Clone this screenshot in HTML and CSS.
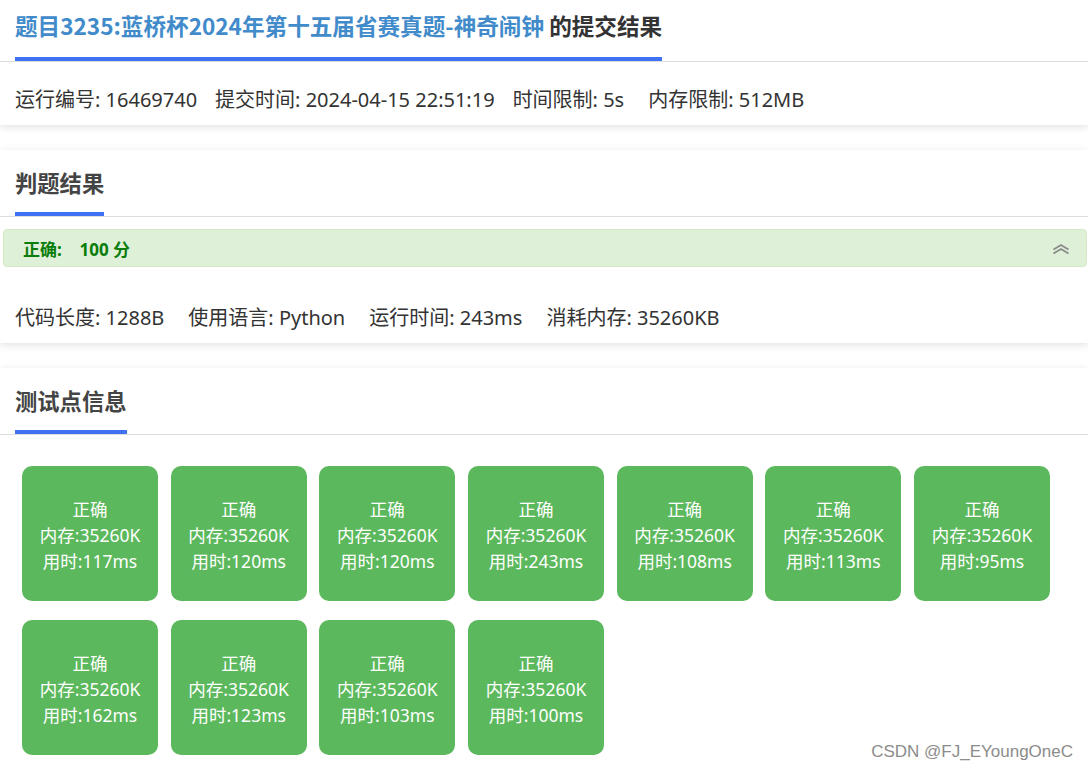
FILE: index.html
```html
<!DOCTYPE html>
<html lang="zh-CN">
<head>
<meta charset="utf-8">
<title>提交结果</title>
<link rel="stylesheet" href="styles.css">
</head>
<body>
<div class="page">
  <section class="card">
    <div class="card-head">
      <h1 class="title"><span class="title-link">题目3235:蓝桥杯2024年第十五届省赛真题-神奇闹钟</span> 的提交结果</h1>
    </div>
    <div class="info info-top">
      <span class="item gap-s">运行编号: 16469740</span>
      <span class="item gap-s">提交时间: 2024-04-15 22:51:19</span>
      <span class="item gap-l">时间限制: 5s</span>
      <span class="item">内存限制: 512MB</span>
    </div>
  </section>

  <section class="card">
    <div class="card-head">
      <h2 class="heading">判题结果</h2>
    </div>
    <div class="alert">
      <span class="alert-text">正确:&nbsp;&nbsp;&nbsp; 100 分</span>
      <svg class="chev" width="18" height="12" viewBox="0 0 18 12" aria-hidden="true">
        <polyline points="1.5,6.5 9,2 16.5,6.5" fill="none" stroke="#8a8a8a" stroke-width="1.8"/>
        <polyline points="1.5,10.5 9,6 16.5,10.5" fill="none" stroke="#8a8a8a" stroke-width="1.8"/>
      </svg>
    </div>
    <div class="info info-bottom">
      <span class="item gap-l">代码长度: 1288B</span>
      <span class="item gap-l">使用语言: Python</span>
      <span class="item gap-l">运行时间: 243ms</span>
      <span class="item">消耗内存: 35260KB</span>
    </div>
  </section>

  <section class="card card-last">
    <div class="card-head">
      <h2 class="heading">测试点信息</h2>
    </div>
    <div class="tests">
      <div class="test"><span>正确</span><span>内存:35260K</span><span>用时:117ms</span></div>
      <div class="test"><span>正确</span><span>内存:35260K</span><span>用时:120ms</span></div>
      <div class="test"><span>正确</span><span>内存:35260K</span><span>用时:120ms</span></div>
      <div class="test"><span>正确</span><span>内存:35260K</span><span>用时:243ms</span></div>
      <div class="test"><span>正确</span><span>内存:35260K</span><span>用时:108ms</span></div>
      <div class="test"><span>正确</span><span>内存:35260K</span><span>用时:113ms</span></div>
      <div class="test"><span>正确</span><span>内存:35260K</span><span>用时:95ms</span></div>
      <div class="test"><span>正确</span><span>内存:35260K</span><span>用时:162ms</span></div>
      <div class="test"><span>正确</span><span>内存:35260K</span><span>用时:123ms</span></div>
      <div class="test"><span>正确</span><span>内存:35260K</span><span>用时:103ms</span></div>
      <div class="test"><span>正确</span><span>内存:35260K</span><span>用时:100ms</span></div>
    </div>
  </section>
  <div class="watermark">CSDN @FJ_EYoungOneC</div>
</div>
</body>
</html>
```

FILE: styles.css
```css
* { box-sizing: border-box; }
html, body {
  margin: 0;
  padding: 0;
  background: #ffffff;
}
body {
  font-family: "Noto Sans", "Noto Sans CJK SC", sans-serif;
  color: #333333;
  overflow: hidden;
}
.page {
  position: relative;
  width: 1088px;
  height: 771px;
  overflow: hidden;
}
.card {
  background: #ffffff;
  box-shadow: 0 2px 8px rgba(0, 0, 0, 0.12);
  margin-bottom: 25px;
}
.card-head {
  border-bottom: 1px solid #dddddd;
  padding-left: 15px;
  line-height: 0;
}
.title {
  display: inline-block;
  margin: 0;
  font-size: 22.6px;
  line-height: 32px;
  font-weight: 700;
  color: #333333;
  padding: 10px 0 15px;
  border-bottom: 4px solid #4070f4;
  font-family: "Noto Sans CJK SC", sans-serif;
}
.title-link { color: #428bca; }
.heading {
  display: inline-block;
  margin: 0;
  font-size: 22.3px;
  line-height: 30px;
  font-weight: 700;
  color: #444444;
  padding: 17px 0 15px;
  border-bottom: 4px solid #4070f4;
  font-family: "Noto Sans CJK SC", sans-serif;
}
.info {
  display: flex;
  padding-left: 15px;
  font-size: 20px;
  line-height: 26px;
  color: #333333;
  white-space: nowrap;
}
.info-top { padding-top: 25px; padding-bottom: 12px; }
.info-bottom { padding-top: 38px; padding-bottom: 12px; }
.gap-s { margin-right: 18px; }
.gap-l { margin-right: 24px; }
.alert {
  display: flex;
  align-items: center;
  justify-content: space-between;
  margin: 12px 1px 0 3px;
  height: 38px;
  padding: 0 16px 0 19px;
  background: #dff0d8;
  border: 1px solid #d6e9c6;
  border-radius: 4px;
}
.alert-text {
  font-size: 17px;
  font-weight: 700;
  color: #0a7d0a;
  font-family: "Noto Sans", "Noto Sans CJK SC", sans-serif;
}
.chev { display: block; margin-top: 2px; }
.card-last { margin-bottom: 0; }
.tests {
  display: grid;
  grid-template-columns: repeat(7, 136px);
  column-gap: 12.67px;
  row-gap: 19px;
  padding: 31px 0 30px 22px;
}
.test {
  height: 135px;
  background: #5cb85c;
  border-radius: 10px;
  color: #ffffff;
  display: flex;
  flex-direction: column;
  align-items: center;
  justify-content: center;
  font-size: 17.5px;
  line-height: 26px;
  padding-top: 3px;
}
.watermark {
  position: absolute;
  right: 15px;
  top: 740px;
  font-family: "Liberation Sans", Arial, sans-serif;
  font-size: 17px;
  line-height: 24px;
  color: #8c8c8c;
}
```
